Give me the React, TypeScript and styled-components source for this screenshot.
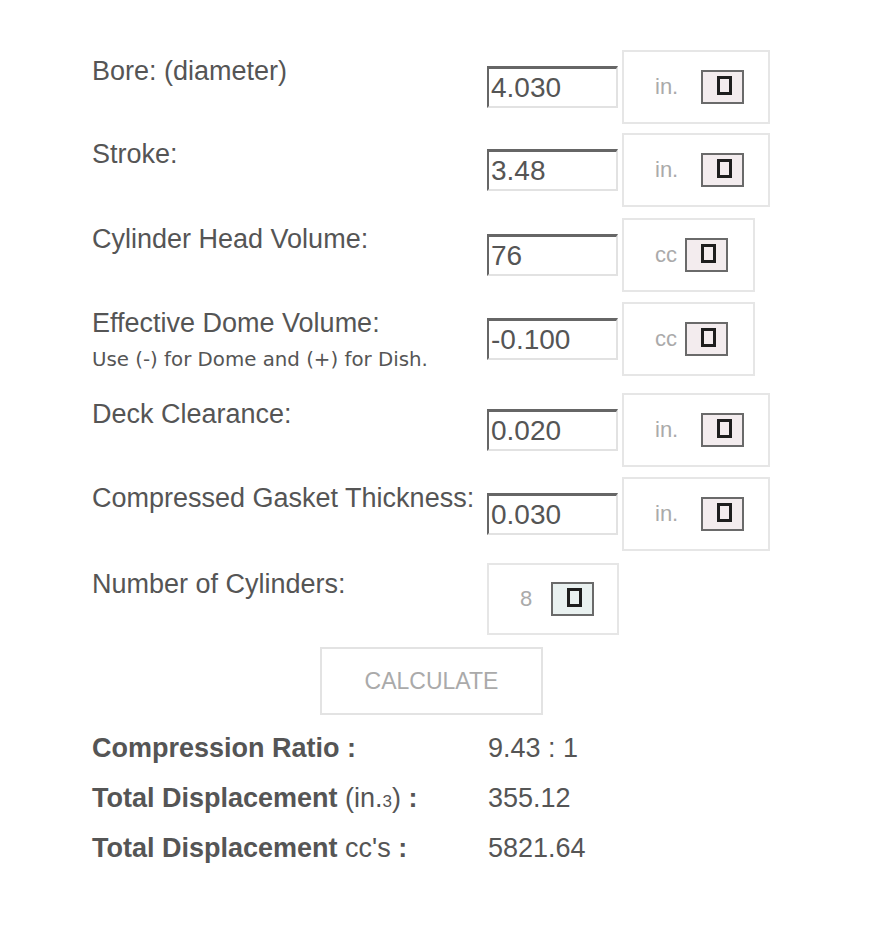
import React from "react";
import styled, { createGlobalStyle } from "styled-components";

const Global = createGlobalStyle`
  html, body { margin: 0; padding: 0; background: #fff; }
  body { font-family: "Liberation Sans", Arial, sans-serif; color: #555; }
`;

const Page = styled.div`
  padding: 50px 0 40px 92px;
`;

const Form = styled.div`
  display: flex;
  flex-direction: column;
  width: 679px;
`;

const Row = styled.div<{ $gap: number }>`
  display: flex;
  align-items: flex-start;
  margin-bottom: ${(p) => p.$gap}px;
`;

const LabelCell = styled.div`
  width: 395px;
  flex-shrink: 0;
  padding-top: 6px;
`;

const Label = styled.div`
  font-size: 27px;
  line-height: 31px;
  color: #555;
  white-space: nowrap;
`;

const Hint = styled.div`
  font-family: "DejaVu Sans", Verdana, sans-serif;
  font-size: 19.8px;
  line-height: 24px;
  margin-top: 9px;
  color: #555;
  white-space: nowrap;
`;

const NumberInput = styled.input`
  box-sizing: border-box;
  width: 131px;
  height: 42px;
  margin: 16px 0 0 0;
  border-style: solid;
  border-width: 3px 2px 2px 2px;
  border-color: #666 #e2e2e2 #e2e2e2 #666;
  padding: 0 0 0 2px;
  font-family: "Liberation Sans", Arial, sans-serif;
  font-size: 28px;
  color: #555;
  background: #fff;
  outline: none;
`;

const UnitBox = styled.div<{ $w: number; $h: number; $offset: number }>`
  box-sizing: border-box;
  width: ${(p) => p.$w}px;
  height: ${(p) => p.$h}px;
  margin-left: ${(p) => p.$offset}px;
  border: 2px solid #e6e6e6;
  display: flex;
  align-items: center;
  padding-left: 31px;
`;

const Unit = styled.span<{ $w: number }>`
  display: inline-block;
  width: ${(p) => p.$w}px;
  font-size: 22px;
  color: #aaa;
`;

const Picker = styled.span<{ $tint: string }>`
  box-sizing: border-box;
  display: flex;
  width: 43px;
  height: 34px;
  border: 2px solid #6a6a6a;
  background: ${(p) => p.$tint};
  padding: 4px 0 0 14px;
`;

const Tofu = styled.span`
  box-sizing: border-box;
  display: block;
  width: 15px;
  height: 19px;
  border: 3px solid #1e1e1e;
`;

const CalcButton = styled.button`
  box-sizing: border-box;
  align-self: center;
  width: 223px;
  height: 68px;
  margin-top: 0;
  border: 2px solid #e3e3e3;
  background: #fff;
  color: #aaa;
  font-family: "Liberation Sans", Arial, sans-serif;
  font-size: 23px;
  padding: 0;
  cursor: pointer;
`;

const Results = styled.div`
  display: grid;
  grid-template-columns: 396px auto;
  grid-auto-rows: 50px;
  margin-top: 8px;
  font-size: 27px;
  line-height: 50px;
  color: #555;
`;

const ResultLabel = styled.div`
  font-weight: bold;
  white-space: nowrap;
`;

const Light = styled.span`
  font-weight: normal;
`;

const Small = styled.span`
  font-size: 17px;
  line-height: 0;
`;

const ResultValue = styled.div`
  white-space: nowrap;
`;

type Field = {
  label: string;
  hint?: string;
  value: string;
  unit: string;
  gap: number;
};

const fields: Field[] = [
  { label: "Bore: (diameter)", value: "4.030", unit: "in.", gap: 9 },
  { label: "Stroke:", value: "3.48", unit: "in.", gap: 11 },
  { label: "Cylinder Head Volume:", value: "76", unit: "cc", gap: 10 },
  {
    label: "Effective Dome Volume:",
    hint: "Use (-) for Dome and (+) for Dish.",
    value: "-0.100",
    unit: "cc",
    gap: 17,
  },
  { label: "Deck Clearance:", value: "0.020", unit: "in.", gap: 10 },
  { label: "Compressed Gasket Thickness:", value: "0.030", unit: "in.", gap: 12 },
];

const UnitSelect: React.FC<{ unit: string; tint?: string }> = ({ unit, tint = "#f3ecee" }) => {
  const isIn = unit === "in.";
  return (
    <UnitBox $w={isIn ? 148 : 133} $h={74} $offset={4}>
      <Unit $w={isIn ? 46 : 30}>{unit}</Unit>
      <Picker $tint={tint}>
        <Tofu />
      </Picker>
    </UnitBox>
  );
};

export default function App() {
  return (
    <>
      <Global />
      <Page>
        <Form>
          {fields.map((f) => (
            <Row key={f.label} $gap={f.gap}>
              <LabelCell>
                <Label>{f.label}</Label>
                {f.hint && <Hint>{f.hint}</Hint>}
              </LabelCell>
              <NumberInput type="text" value={f.value} readOnly />
              <UnitSelect unit={f.unit} />
            </Row>
          ))}
          <Row $gap={12}>
            <LabelCell>
              <Label>Number of Cylinders:</Label>
            </LabelCell>
            <UnitBox $w={132} $h={72} $offset={0}>
              <Unit $w={31}>8</Unit>
              <Picker $tint="#e9f1f0">
                <Tofu />
              </Picker>
            </UnitBox>
          </Row>
          <CalcButton type="button">CALCULATE</CalcButton>
          <Results>
            <ResultLabel>Compression Ratio :</ResultLabel>
            <ResultValue>9.43 : 1</ResultValue>
            <ResultLabel>
              Total Displacement{" "}
              <Light>
                (in.<Small>3</Small>)
              </Light>{" "}
              :
            </ResultLabel>
            <ResultValue>355.12</ResultValue>
            <ResultLabel>
              Total Displacement <Light>cc's</Light> :
            </ResultLabel>
            <ResultValue>5821.64</ResultValue>
          </Results>
        </Form>
      </Page>
    </>
  );
}
